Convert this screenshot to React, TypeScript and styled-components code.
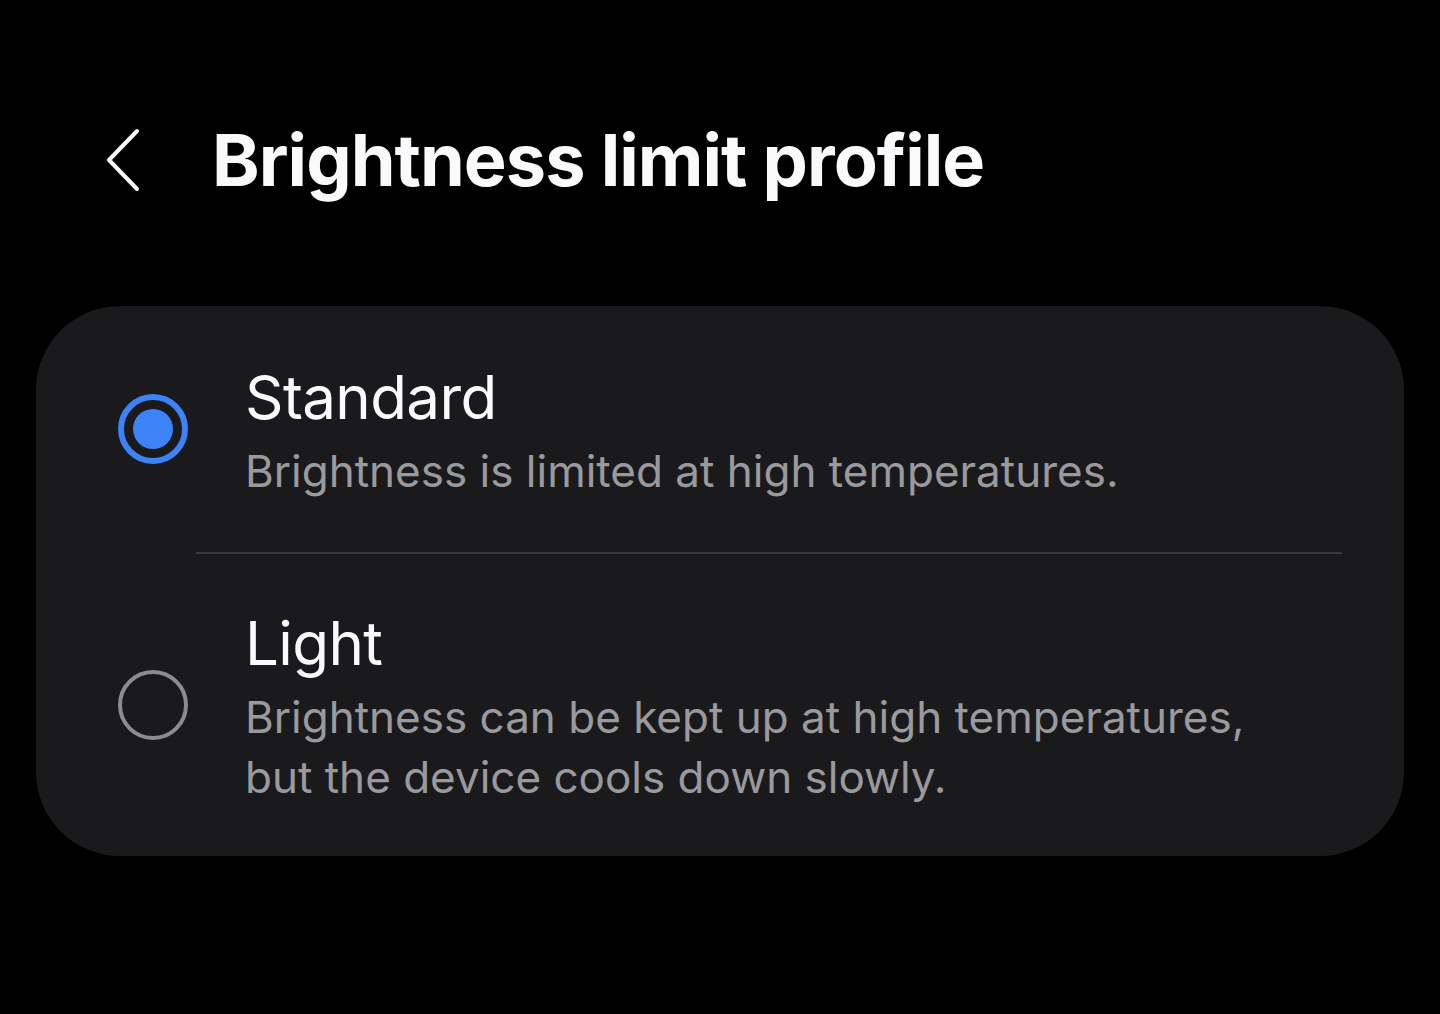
import React from "react";
import styled, { createGlobalStyle } from "styled-components";

const Global = createGlobalStyle`
  html, body { margin: 0; padding: 0; background: #000; }
  body { font-family: Inter, "Noto Sans", sans-serif; -webkit-font-smoothing: antialiased; }
  * { box-sizing: border-box; }
`;

const Page = styled.div`
  width: 1440px;
  height: 1014px;
  background: #000;
  display: flex;
  flex-direction: column;
  overflow: hidden;
`;

const Header = styled.header`
  display: flex;
  align-items: center;
  height: 160px;
  padding-left: 100px;
  padding-top: 80px;
  gap: 66px;
  box-sizing: content-box;
`;

const BackButton = styled.button`
  background: none;
  border: none;
  padding: 0;
  width: 46px;
  height: 70px;
  display: flex;
  align-items: center;
  justify-content: center;
  cursor: pointer;
`;

const Title = styled.h1`
  margin: 0;
  color: #fafafc;
  font-size: 72px;
  font-weight: 700;
  letter-spacing: -0.95px;
  line-height: 1;
`;

const Card = styled.section`
  margin: 66px 36px 0 36px;
  background: #1a1a1c;
  border-radius: 84px;
  display: flex;
  flex-direction: column;
`;

const Option = styled.div<{ $top: number; $bottom: number }>`
  display: grid;
  grid-template-columns: 209px 1fr;
  align-items: center;
  padding: ${(p) => p.$top}px 60px ${(p) => p.$bottom}px 0;
  cursor: pointer;
`;

const RadioCell = styled.div`
  display: flex;
  justify-content: flex-end;
  padding-right: 57px;
`;

const Radio = styled.span<{ $checked: boolean }>`
  width: 70px;
  height: 70px;
  border-radius: 50%;
  border: ${(p) => (p.$checked ? "6px solid #3d82f6" : "4px solid #8c8c90")};
  display: flex;
  align-items: center;
  justify-content: center;
  &::after {
    content: "";
    display: ${(p) => (p.$checked ? "block" : "none")};
    width: 40px;
    height: 40px;
    border-radius: 50%;
    background: #3d82f6;
  }
`;

const Texts = styled.div`
  display: flex;
  flex-direction: column;
`;

const OptionTitle = styled.div`
  color: #fafafc;
  font-size: 60px;
  font-weight: 400;
  letter-spacing: -0.6px;
  line-height: 80px;
`;

const OptionDesc = styled.div`
  color: #9a9a9e;
  font-size: 44px;
  font-weight: 400;
  line-height: 60px;
  margin-top: 4px;
`;

const Divider = styled.div`
  height: 2px;
  background: #3a3a3c;
  margin: 0 62px 0 160px;
`;

const Chevron = () => (
  <svg width="40" height="66" viewBox="0 0 40 66" fill="none">
    <path d="M34 4 L6 33 L34 62" stroke="#fafafc" strokeWidth="4" strokeLinecap="round" strokeLinejoin="round" />
  </svg>
);

export default function App() {
  return (
    <Page>
      <Global />
      <Header>
        <BackButton aria-label="Back">
          <Chevron />
        </BackButton>
        <Title>Brightness limit profile</Title>
      </Header>
      <Card>
        <Option $top={51} $bottom={51}>
          <RadioCell>
            <Radio $checked />
          </RadioCell>
          <Texts>
            <OptionTitle>Standard</OptionTitle>
            <OptionDesc>Brightness is limited at high temperatures.</OptionDesc>
          </Texts>
        </Option>
        <Divider />
        <Option $top={49} $bottom={49}>
          <RadioCell>
            <Radio $checked={false} />
          </RadioCell>
          <Texts>
            <OptionTitle>Light</OptionTitle>
            <OptionDesc>
              Brightness can be kept up at high temperatures,
              <br />
              but the device cools down slowly.
            </OptionDesc>
          </Texts>
        </Option>
      </Card>
    </Page>
  );
}
